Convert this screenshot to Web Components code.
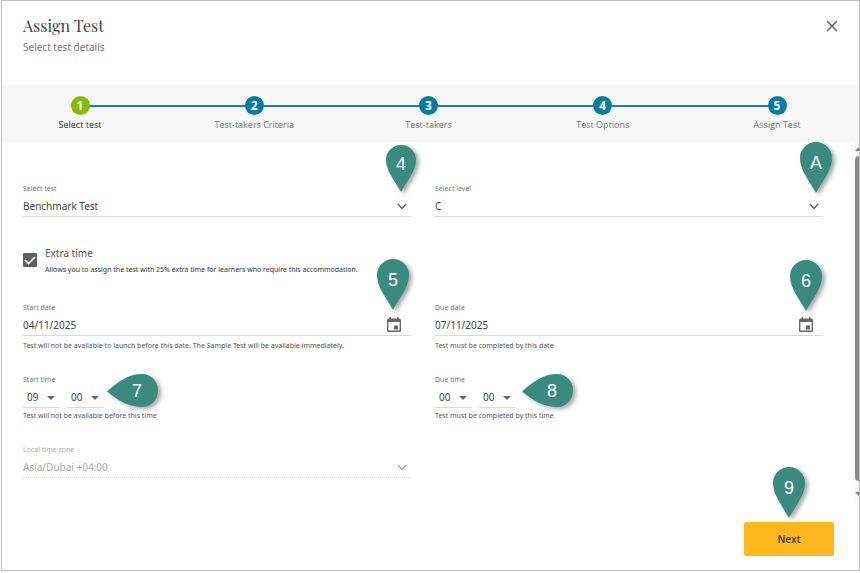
<!DOCTYPE html>
<html lang="en">
<head>
<meta charset="utf-8">
<title>Assign Test</title>
<style>
  body {
    margin: 0;
    background: #fff;
    color: #555;
    font: 10px/16px "Noto Sans", "Open Sans", sans-serif;
  }
</style>
</head>
<body>
<assign-dialog heading="Assign Test" subheading="Select test details">
  <step-list slot="steps" current="1" steps="Select test|Test-takers Criteria|Test-takers|Test Options|Assign Test"></step-list>
  <select-field label="Select test" value="Benchmark Test">
    <map-pin label="4" size="small" style="right:-5px;top:-39px"></map-pin>
  </select-field>
  <select-field label="Select level" value="C">
    <map-pin label="A" style="right:-9px;top:-42px"></map-pin>
  </select-field>
  <check-field label="Extra time" hint="Allows you to assign the test with 25% extra time for learners who require this accommodation."></check-field>
  <date-field label="Start date" value="04/11/2025" hint="Test will not be available to launch before this date. The Sample Test will be available immediately.">
    <map-pin label="5" style="right:2px;top:-44px"></map-pin>
  </date-field>
  <date-field label="Due date" value="07/11/2025" hint="Test must be completed by this date">
    <map-pin label="6" style="right:1px;top:-43px"></map-pin>
  </date-field>
  <time-field label="Start time" hour="09" minute="00" hint="Test will not be available before this time">
    <map-pin label="7" point="left" style="left:84px;top:-1px"></map-pin>
  </time-field>
  <time-field label="Due time" hour="00" minute="00" hint="Test must be completed by this time">
    <map-pin label="8" point="left" style="left:87px;top:-1px"></map-pin>
  </time-field>
  <select-field label="Local time zone" value="Asia/Dubai +04:00" disabled></select-field>
  <next-button slot="actions">Next
    <map-pin slot="pin" label="9" style="left:29px;top:-55px"></map-pin>
  </next-button>
</assign-dialog>

<script>
const fieldStyles = `
  :host { display: block; position: relative; }
  * { box-sizing: border-box; }
  label, .caption { display: block; font-size: 7px; line-height: 10px; color: #777; margin-bottom: 1px; }
  .control { position: relative; display: flex; align-items: center; height: 22px; border-bottom: 1px solid #d9d9d9; }
  input, select {
    appearance: none; flex: 1; min-width: 0; width: 100%; height: 21px; margin: 0; padding: 0;
    border: 0; border-radius: 0; outline-offset: 1px; background: none; color: #444;
    font: inherit; opacity: 1;
  }
  .hint { margin: 0; font-size: 7px; line-height: 10px; color: #555; }
`;

class BaseElement extends HTMLElement {
  connectedCallback() {
    if (this.shadowRoot) return;
    this.attachShadow({ mode: 'open' }).innerHTML = this.render();
  }
  attr(name) { return this.getAttribute(name) || ''; }
}

customElements.define('assign-dialog', class extends BaseElement {
  render() {
    return `<style>
      :host { display: flex; box-sizing: border-box; min-height: 100vh; padding: 0 0 2px 1px; }
      * { box-sizing: border-box; }
      section { flex: 1; min-width: 0; display: flex; flex-direction: column; border: 1px solid #bfbfbf; }
      header { display: flex; justify-content: space-between; align-items: flex-start; min-height: 84px; padding: 14px 17px 0 21px; }
      h1 { margin: 0; font: 16px/22px "Playfair Display", "Liberation Serif", serif; color: #444; }
      p { margin: 1px 0 0; line-height: 18px; color: #777; }
      .close { width: 20px; height: 20px; margin-top: 1px; padding: 4px; border: 0; background: none; color: #5f5f5f; }
      .close svg { display: block; }
      .scroll { display: flex; flex: 1; }
      form { flex: 1; display: grid; grid-template-columns: 1fr 1fr; gap: 24px; align-content: start; padding: 42px 32px 16px 21px; }
      .bar { width: 4px; display: flex; flex-direction: column; background: #f8f8f8; overflow: hidden; padding: 5px 0 4px; gap: 5px; }
      .bar svg { display: block; flex: none; }
      .thumb { flex: 1; width: 8px; margin-bottom: 6px; border-radius: 4px; background: #898989; }
      footer { display: flex; justify-content: flex-end; padding: 22px 25px 14px; }
    </style>
    <section role="dialog" aria-labelledby="title">
      <header>
        <div><h1 id="title">${this.attr('heading')}</h1><p>${this.attr('subheading')}</p></div>
        <button class="close" aria-label="Close"><svg width="12" height="12" viewBox="0 0 12 12" fill="none" stroke="currentColor" stroke-width="1.5"><path d="M1 1l10 10M11 1L1 11"/></svg></button>
      </header>
      <slot name="steps"></slot>
      <div class="scroll">
        <form><slot></slot></form>
        <div class="bar" aria-hidden="true">
          <svg width="8" height="4" viewBox="0 0 8 4"><path d="M0 4l4-4 4 4z" fill="#777"/></svg>
          <div class="thumb"></div>
          <svg width="8" height="4" viewBox="0 0 8 4"><path d="M0 0l4 4 4-4z" fill="#777"/></svg>
        </div>
      </div>
      <footer><slot name="actions"></slot></footer>
    </section>`;
  }
});

customElements.define('step-list', class extends BaseElement {
  render() {
    const current = Number(this.attr('current'));
    const items = this.attr('steps').split('|').map((name, i) =>
      `<li ${i + 1 === current ? 'aria-current="step"' : ''}><b>${i + 1}</b><span>${name}</span></li>`).join('');
    return `<style>
      :host { display: block; background: #f7f7f7; padding: 11px 70px 10px 66px; font-family: "Open Sans", "Noto Sans", sans-serif; }
      ol { list-style: none; margin: 0; padding: 0; display: flex; justify-content: space-between;
           background: linear-gradient(#1784a8, #1784a8) center 9px / calc(100% - 24px) 2px no-repeat; }
      li { display: flex; flex-direction: column; align-items: center; width: 24px; white-space: nowrap; }
      b { width: 19px; height: 19px; border-radius: 50%; background: #087c9f; color: #fff; font-size: 12px; line-height: 19px; text-align: center; }
      span { font-size: 9px; line-height: 14px; margin-top: 3px; color: #777; }
      [aria-current] b { background: #84bd00; }
      [aria-current] span { color: #333; }
    </style><ol>${items}</ol>`;
  }
});

customElements.define('select-field', class extends BaseElement {
  render() {
    return `<style>${fieldStyles}
      svg { position: absolute; right: 4px; top: 8px; pointer-events: none; color: #666; }
      :host([disabled]) label, :host([disabled]) select, :host([disabled]) svg { color: #aaa; }
      :host([disabled]) .control { border-bottom-style: dotted; }
    </style>
    <label for="value">${this.attr('label')}</label>
    <div class="control">
      <select id="value" ${this.hasAttribute('disabled') ? 'disabled' : ''}><option>${this.attr('value')}</option></select>
      <svg width="10" height="7" viewBox="0 0 10 7" fill="none" stroke="currentColor" stroke-width="1.4"><path d="M.8 1L5 5.4 9.2 1"/></svg>
    </div>
    <slot></slot>`;
  }
});

customElements.define('date-field', class extends BaseElement {
  render() {
    return `<style>${fieldStyles}
      button { width: 14px; height: 16px; margin-right: 10px; padding: 0; border: 0; background: none; color: #666; }
      svg { display: block; }
      .hint { margin-top: 5px; }
    </style>
    <label for="value">${this.attr('label')}</label>
    <div class="control">
      <input id="value" type="text" value="${this.attr('value')}" aria-describedby="hint">
      <button type="button" aria-label="Choose date"><svg width="14" height="15" viewBox="0 0 14 15"><path fill="currentColor" fill-rule="evenodd" d="M2.500 0H4v1.500h6V0h1.500v1.500H12a2 2 0 0 1 2 2V13.500a1.500 1.500 0 0 1-1.500 1.500h-11A1.500 1.500 0 0 1 0 13.500V3.500a2 2 0 0 1 2-2h.500zM1.400 5v8.600h11.200V5zM7 8.500h4v4H7z"/></svg></button>
    </div>
    <p class="hint" id="hint">${this.attr('hint')}</p>
    <slot></slot>`;
  }
});

customElements.define('time-field', class extends BaseElement {
  render() {
    const part = (name, value) => `<div class="control"><select aria-label="${this.attr('label')} ${name}"><option>${value}</option></select>
      <svg width="8" height="4" viewBox="0 0 8 4"><path d="M0 0h8L4 4z" fill="#666"/></svg></div>`;
    return `<style>${fieldStyles}
      .parts { display: flex; gap: 7px; }
      .control { width: 37px; }
      select { padding-left: 4px; }
      svg { position: absolute; right: 5px; top: 10px; pointer-events: none; }
      .hint { margin-top: 3px; }
    </style>
    <div class="caption">${this.attr('label')}</div>
    <div class="parts" role="group" aria-label="${this.attr('label')}">${part('hour', this.attr('hour'))}${part('minute', this.attr('minute'))}</div>
    <p class="hint">${this.attr('hint')}</p>
    <slot></slot>`;
  }
});

customElements.define('check-field', class extends BaseElement {
  render() {
    return `<style>
      :host { display: block; grid-column: 1 / -1; padding: 4px 0; }
      label { display: grid; grid-template-columns: 14px 1fr; column-gap: 8px; align-items: center; }
      .box { display: grid; width: 14px; height: 14px; }
      input, svg { grid-area: 1 / 1; }
      input { appearance: none; width: 14px; height: 14px; margin: 0; border: 1px solid #616161; border-radius: 1px; background: #fff; }
      input:checked { background: #616161; }
      svg { pointer-events: none; }
      input:not(:checked) + svg { visibility: hidden; }
      .name { display: block; line-height: 16px; }
      .hint { display: block; margin-top: 3px; font-size: 7px; line-height: 11px; color: #333; }
    </style>
    <label>
      <span class="box"><input type="checkbox" checked><svg width="14" height="14" viewBox="0 0 14 14" fill="none" stroke="#fff" stroke-width="1.600"><path d="M2 7l3.500 3.500L12 4"/></svg></span>
      <span><span class="name">${this.attr('label')}</span><span class="hint">${this.attr('hint')}</span></span>
    </label>`;
  }
});

customElements.define('next-button', class extends BaseElement {
  render() {
    return `<style>
      :host { display: block; position: relative; }
      button { display: block; min-width: 90px; height: 34px; padding: 0 16px; border: 0; border-radius: 2px; background: #ffb81c; color: #444; font: inherit; font-weight: 600; }
    </style><button type="button"><slot></slot></button><slot name="pin"></slot>`;
  }
});

customElements.define('map-pin', class extends BaseElement {
  render() {
    const left = this.attr('point') === 'left';
    const small = this.attr('size') === 'small';
    const w = left ? 51 : small ? 30 : 32;
    const h = left ? 33 : small ? 47 : 51;
    const box = left ? '0 0 51 32' : '0 0 32 51';
    const path = left
      ? 'M0 17C11 7 22 0 35 0a16 16 0 0 1 0 32C22 32 11 26 0 17z'
      : 'M16 51C9 38 0 28 0 16a16 16 0 0 1 32 0C32 28 23 38 16 51z';
    return `<style>
      :host { display: grid; position: absolute; z-index: 1; width: ${w}px; height: ${h}px; pointer-events: none; }
      svg, span { grid-area: 1 / 1; }
      svg { overflow: visible; filter: drop-shadow(3px 2px 2px rgba(0,0,0,.35)); }
      span { position: relative; color: #fff; font: 18px/20px "Liberation Sans", Arial, sans-serif; text-align: center;
             padding: ${left ? '7px 0 0 9px' : small ? '9px 0 0' : '11px 0 0'}; }
    </style>
    <svg width="${w}" height="${h}" viewBox="${box}" preserveAspectRatio="none" aria-hidden="true"><path d="${path}" fill="#398b80"/></svg>
    <span>${this.attr('label')}</span>`;
  }
});
</script>
</body>
</html>
